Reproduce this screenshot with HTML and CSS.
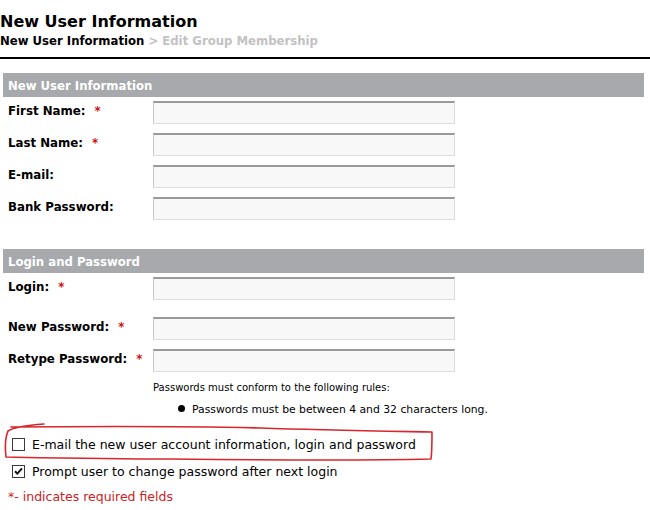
FILE: index.html
```html
<!DOCTYPE html>
<html>
<head>
<meta charset="utf-8">
<link rel="stylesheet" href="styles.css">
</head>
<body>
<div class="page">
  <h1 class="title">New User Information</h1>
  <div class="crumbs"><span class="crumb-current">New User Information</span><span class="crumb-next"> &gt; Edit Group Membership</span></div>
  <div class="rule"></div>

  <div class="section">
    <div class="section-head">New User Information</div>
    <div class="row"><label class="label">First Name:<span class="req">*</span></label><input class="field" type="text"></div>
    <div class="row"><label class="label">Last Name:<span class="req">*</span></label><input class="field" type="text"></div>
    <div class="row"><label class="label">E-mail:</label><input class="field" type="text"></div>
    <div class="row"><label class="label">Bank Password:</label><input class="field" type="password"></div>
  </div>

  <div class="section section-login">
    <div class="section-head">Login and Password</div>
    <div class="row row-login"><label class="label">Login:<span class="req">*</span></label><input class="field" type="text"></div>
    <div class="row"><label class="label">New Password:<span class="req">*</span></label><input class="field" type="password"></div>
    <div class="row"><label class="label">Retype Password:<span class="req">*</span></label><input class="field" type="password"></div>
    <div class="rules">
      <p class="rules-intro">Passwords must conform to the following rules:</p>
      <ul class="rules-list"><li><span class="dot"></span>Passwords must be between 4 and 32 characters long.</li></ul>
    </div>
  </div>

  <div class="options">
    <label class="option"><span class="box"></span><span>E-mail the new user account information, login and password</span></label>
    <label class="option"><span class="box"><svg viewBox="0 0 13 13" width="13" height="13"><path d="M3 6.2 L5.3 8.6 L10 3.4" fill="none" stroke="#111" stroke-width="2"/></svg></span><span>Prompt user to change password after next login</span></label>
    <p class="footnote">*- indicates required fields</p>
  </div>

  <svg class="annotation" width="650" height="510" viewBox="0 0 650 510">
    <path d="M44 424 C30 425 14 427 8 431 C5 438 5 448 6 457 C60 458 110 459 170 459 C260 460 350 461 431 459 C432 452 432 440 432 432 C380 431 320 430 260 428 C180 426 110 426 11 427"
      fill="none" stroke="#d9262c" stroke-width="1.6" stroke-linecap="round" stroke-linejoin="round"/>
  </svg>
</div>
</body>
</html>
```

FILE: styles.css
```css
html, body {
  margin: 0;
  padding: 0;
  background: #ffffff;
}

.page {
  position: relative;
  width: 650px;
  height: 510px;
  font-family: "DejaVu Sans", Verdana, sans-serif;
  color: #000;
  overflow: hidden;
}

.title {
  margin: 0;
  padding-top: 12px;
  font-size: 16px;
  line-height: 20px;
  font-weight: bold;
}

.crumbs {
  margin-top: 1px;
  font-size: 11.7px;
  line-height: 16px;
  font-weight: bold;
}

.crumb-next {
  color: #c2c2c2;
}

.rule {
  margin-top: 8px;
  height: 2px;
  background: #000;
}

.section {
  margin: 14px 6px 0 3px;
}

.section-login {
  margin-top: 29px;
}

.section-head {
  height: 24px;
  background: #a7a9ac;
  color: #fff;
  font-size: 11.7px;
  font-weight: bold;
  line-height: 26px;
  padding-left: 5px;
  margin-bottom: 4px;
}

.row {
  display: flex;
  align-items: flex-start;
  height: 23px;
  margin-bottom: 9px;
}

.row-login {
  margin-bottom: 17px;
}

.label {
  width: 145px;
  padding-left: 5px;
  font-size: 11.8px;
  font-weight: bold;
  line-height: 16px;
  padding-top: 2px;
}

.req {
  color: #cc1111;
  margin-left: 9px;
}

.field {
  box-sizing: border-box;
  width: 302px;
  height: 23px;
  margin: 0;
  padding: 2px 4px;
  background: #f8f8f8;
  border: 1px solid #dcdcdc;
  border-top: 2px solid #9a9a9a;
  border-left-color: #c8c8c8;
  font-family: inherit;
  font-size: 12px;
}

.rules {
  padding-left: 150px;
  margin-top: 4px;
  font-size: 10px;
  line-height: 13px;
}

.rules-intro {
  margin: 0;
}

.rules-list {
  list-style: none;
  margin: 9px 0 0 0;
  padding-left: 25px;
  font-size: 10.8px;
}

.rules-list li {
  display: flex;
  align-items: center;
}

.dot {
  width: 7px;
  height: 7px;
  border-radius: 50%;
  background: #000;
  margin: 0 7px 3px 0;
}

.options {
  margin-top: 20px;
  padding-left: 12px;
  font-size: 12.5px;
}

.option {
  display: flex;
  align-items: center;
  gap: 7px;
  height: 16px;
  margin-bottom: 11px;
}

.box {
  box-sizing: border-box;
  width: 13px;
  height: 13px;
  border: 1px solid #3a3a3a;
  background: #fff;
  display: flex;
}

.box svg {
  margin: -1px;
}

.footnote {
  margin: -1px 0 0 -4px;
  color: #cc2222;
}

.annotation {
  position: absolute;
  left: 0;
  top: 0;
  pointer-events: none;
}
```
